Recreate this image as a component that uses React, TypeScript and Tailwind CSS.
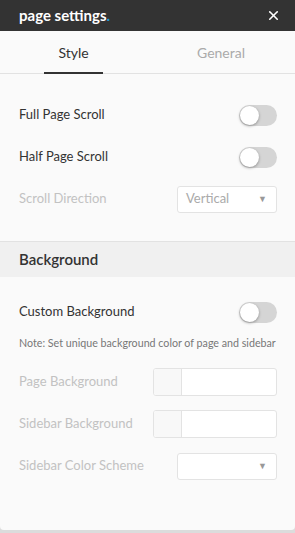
import { X } from 'lucide-react'

function Toggle() {
  return (
    <div className="relative w-[38px] h-[21px] rounded-full bg-[#d5d5d5]">
      <div className="absolute left-[1px] top-[1px] w-[19px] h-[19px] rounded-full bg-white shadow-[0_1px_3px_rgba(0,0,0,0.35)]" />
    </div>
  )
}

function Select({ value }: { value?: string }) {
  return (
    <div className="w-[100px] h-[27px] rounded-[3px] border border-[#e3e3e3] bg-white flex items-center justify-between pl-[8px] pr-[9px]">
      <span className="text-[13px] text-[#aaa]">{value}</span>
      <span className="text-[9px] text-[#999]">▼</span>
    </div>
  )
}

function ColorInput() {
  return (
    <div className="w-[124px] h-[28px] rounded-[3px] border border-[#e3e3e3] bg-white flex overflow-hidden">
      <div className="w-[28px] h-full bg-[#f8f8f8] border-r border-[#e3e3e3]" />
    </div>
  )
}

function Row({ label, muted, children }: { label: string; muted?: boolean; children: React.ReactNode }) {
  return (
    <div className="h-[42px] flex items-center justify-between pl-[19px] pr-[18px]">
      <span className={`text-[13px] ${muted ? 'text-[#c2c2c2]' : 'text-[#333]'}`}>{label}</span>
      {children}
    </div>
  )
}

export default function App() {
  return (
    <div className="w-[295px] h-[533px] bg-[#dcdcdc] flex flex-col" style={{ fontFamily: 'Lato, sans-serif' }}>
      <div className="flex-1 bg-[#fafafa] rounded-b-[4px] flex flex-col mb-[3px]">
        {/* header */}
        <div className="h-[31px] shrink-0 bg-[#333] flex items-center justify-between pl-[19px] pr-[14px]">
          <span className="text-[15px] font-bold text-white">page settings<span className="text-[#1e9bd7]">.</span></span>
          <X className="w-[15px] h-[15px] text-white" strokeWidth={2.6} />
        </div>

        {/* tabs */}
        <div className="h-[43px] shrink-0 flex border-b border-[#e2e2e2]">
          <div className="w-[147px] flex justify-center items-center relative">
            <span className="text-[14px] text-[#333]">Style</span>
            <div className="absolute bottom-[-1px] left-[44px] w-[59px] h-[2px] bg-[#333]" />
          </div>
          <div className="flex-1 flex justify-center items-center">
            <span className="text-[14px] text-[#aaa]">General</span>
          </div>
        </div>

        <div className="pt-[20px] pb-[21px]">
          <Row label="Full Page Scroll"><Toggle /></Row>
          <Row label="Half Page Scroll"><Toggle /></Row>
          <Row label="Scroll Direction" muted><Select value="Vertical" /></Row>
        </div>

        {/* background section */}
        <div className="h-[36px] shrink-0 bg-[#f0f0f0] border-t border-[#e2e2e2] flex items-center pl-[19px]">
          <span className="text-[15px] font-semibold text-[#333]">Background</span>
        </div>

        <div className="pt-[14px]">
          <Row label="Custom Background"><Toggle /></Row>
          <p className="pl-[19px] text-[10.7px] leading-[16px] text-[#777] mt-[2px] mb-[10px]">Note: Set unique background color of page and sidebar</p>
          <Row label="Page Background" muted><ColorInput /></Row>
          <Row label="Sidebar Background" muted><ColorInput /></Row>
          <Row label="Sidebar Color Scheme" muted><Select /></Row>
        </div>
      </div>
    </div>
  )
}
